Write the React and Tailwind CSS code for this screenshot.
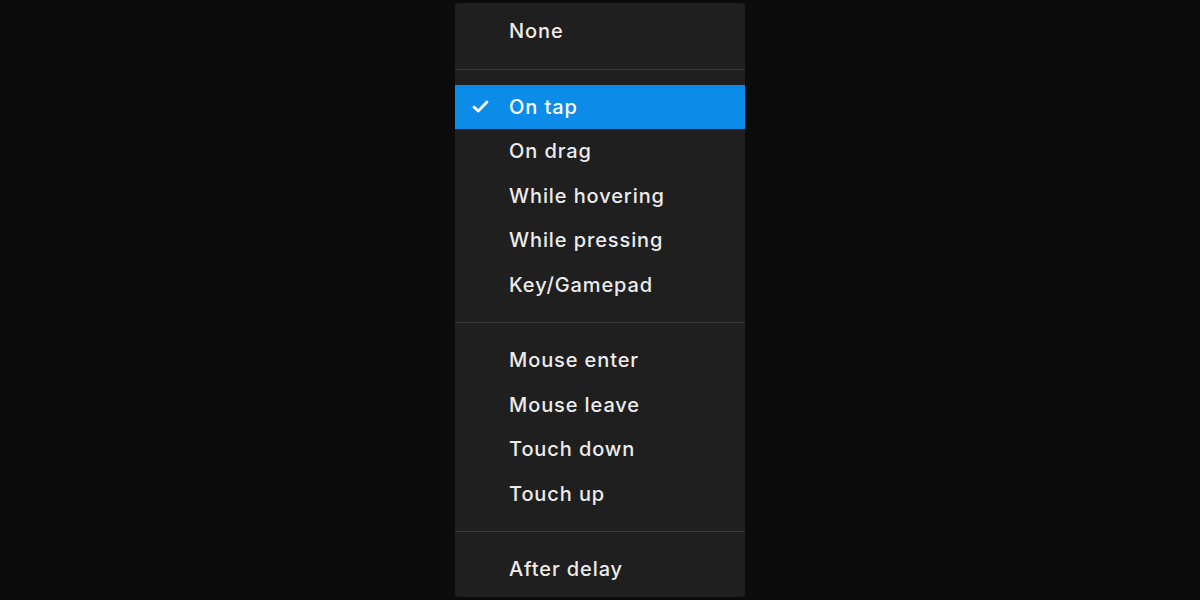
import React from "react";

const groups = [
  ["None"],
  ["On tap", "On drag", "While hovering", "While pressing", "Key/Gamepad"],
  ["Mouse enter", "Mouse leave", "Touch down", "Touch up"],
  ["After delay"],
];

const Check = () => (
  <svg width="17" height="13" viewBox="0 0 17 13" fill="none">
    <path d="M2 7l4.2 4L15 2" stroke="white" strokeWidth="2.8" strokeLinecap="round" strokeLinejoin="round" />
  </svg>
);

export default function App() {
  const selected = "On tap";
  return (
    <div
      className="w-[1200px] h-[600px] bg-[#0b0b0b] flex justify-center pt-[3px]"
      style={{ fontFamily: "Inter, 'Noto Sans', sans-serif" }}
    >
      <div className="w-[290px] h-[594px] bg-[#1f1f1f] rounded-[3px] pt-[6px] flex flex-col">
        {groups.map((group, gi) => (
          <div key={gi}>
            {gi > 0 && (
              <div className="py-[15px]">
                <div className="h-px bg-[#383838]"></div>
              </div>
            )}
            {group.map((item) => (
              <div
                key={item}
                className={
                  "h-[44.5px] flex items-center text-[20px] font-medium text-[#ececec] " +
                  (item === selected ? "bg-[#0c8ce9] text-white" : "")
                }
              >
                <div className="w-[50px] flex justify-center">
                  {item === selected && <Check />}
                </div>
                <span className="ml-[4px] tracking-[0.9px]">{item}</span>
              </div>
            ))}
          </div>
        ))}
      </div>
    </div>
  );
}
